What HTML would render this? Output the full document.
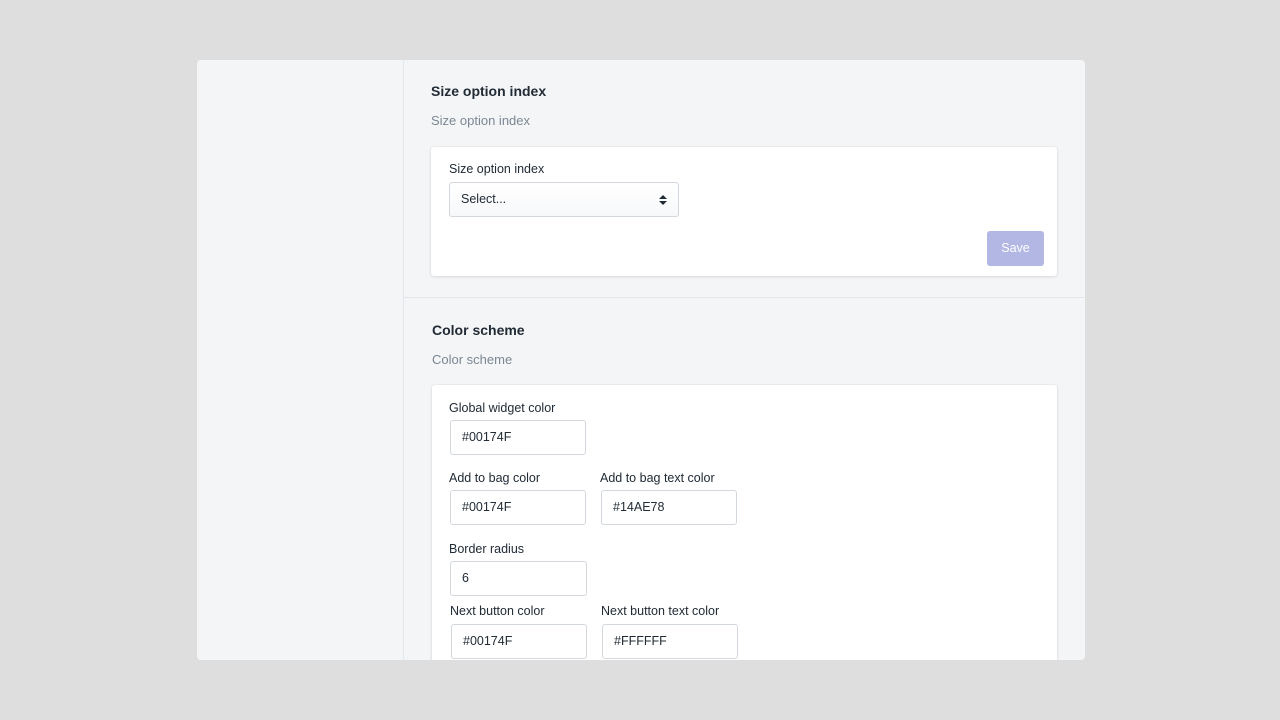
<!DOCTYPE html>
<html><head><style>
body{margin:0;width:1280px;height:720px;background:#dedede;position:relative;overflow:hidden;font-family:"Liberation Sans",sans-serif;}
.a{position:absolute}
.panel{left:197px;top:60px;width:888px;height:600px;background:#f4f5f7;border-radius:4px;overflow:hidden}
.card{background:#fff;border-radius:3px;box-shadow:0 0 0 1px rgba(63,63,68,.03),0 1px 3px rgba(63,63,68,.12)}
.h{font-size:14px;font-weight:bold;color:#212b36}
.s{font-size:13px;color:#7b8794}
.l{font-size:12.5px;color:#212b36}
.in{box-sizing:border-box;height:35px;width:136px;border:1px solid #d3d8de;border-radius:3px;background:#fff;font-size:12.5px;color:#212b36;padding:0 0 0 11px;line-height:33px}
</style></head><body>
<div class="a panel">
 <div class="a" style="left:206px;top:0;width:1px;height:600px;background:#e3e6ea"></div>
 <div class="a" style="left:207px;top:237px;width:681px;height:1px;background:#e3e6ea"></div>
</div>
<div class="a h" style="left:431px;top:83px">Size option index</div>
<div class="a s" style="left:431px;top:113px">Size option index</div>
<div class="a card" style="left:431px;top:147px;width:626px;height:129px"></div>
<div class="a l" style="left:449px;top:162px">Size option index</div>
<div class="a in" style="left:449px;top:182px;width:230px;background:linear-gradient(#fff,#f7f8fa)">Select...
 <svg class="a" style="left:209px;top:11px" width="8" height="12" viewBox="0 0 8 12"><path d="M0 5L4 1L8 5Z M0 7L4 11L8 7Z" fill="#212b36"/></svg></div>
<div class="a" style="left:987px;top:231px;width:57px;height:35px;background:#b3b7e3;border-radius:3px;color:#fff;font-size:12.5px;text-align:center;line-height:35px">Save</div>

<div class="a h" style="left:432px;top:322px">Color scheme</div>
<div class="a s" style="left:432px;top:352px">Color scheme</div>
<div class="a card" style="left:432px;top:385px;width:625px;height:290px"></div>
<div class="a l" style="left:449px;top:401px">Global widget color</div>
<div class="a in" style="left:450px;top:420px">#00174F</div>
<div class="a l" style="left:449px;top:471px">Add to bag color</div>
<div class="a l" style="left:600px;top:471px">Add to bag text color</div>
<div class="a in" style="left:450px;top:490px">#00174F</div>
<div class="a in" style="left:601px;top:490px">#14AE78</div>
<div class="a l" style="left:449px;top:542px">Border radius</div>
<div class="a in" style="left:450px;top:561px;width:137px">6</div>
<div class="a l" style="left:450px;top:604px">Next button color</div>
<div class="a l" style="left:601px;top:604px">Next button text color</div>
<div class="a in" style="left:451px;top:624px">#00174F</div>
<div class="a in" style="left:602px;top:624px">#FFFFFF</div>
<div class="a" style="left:0;top:660px;width:1280px;height:60px;background:#dedede"></div>
</body></html>
